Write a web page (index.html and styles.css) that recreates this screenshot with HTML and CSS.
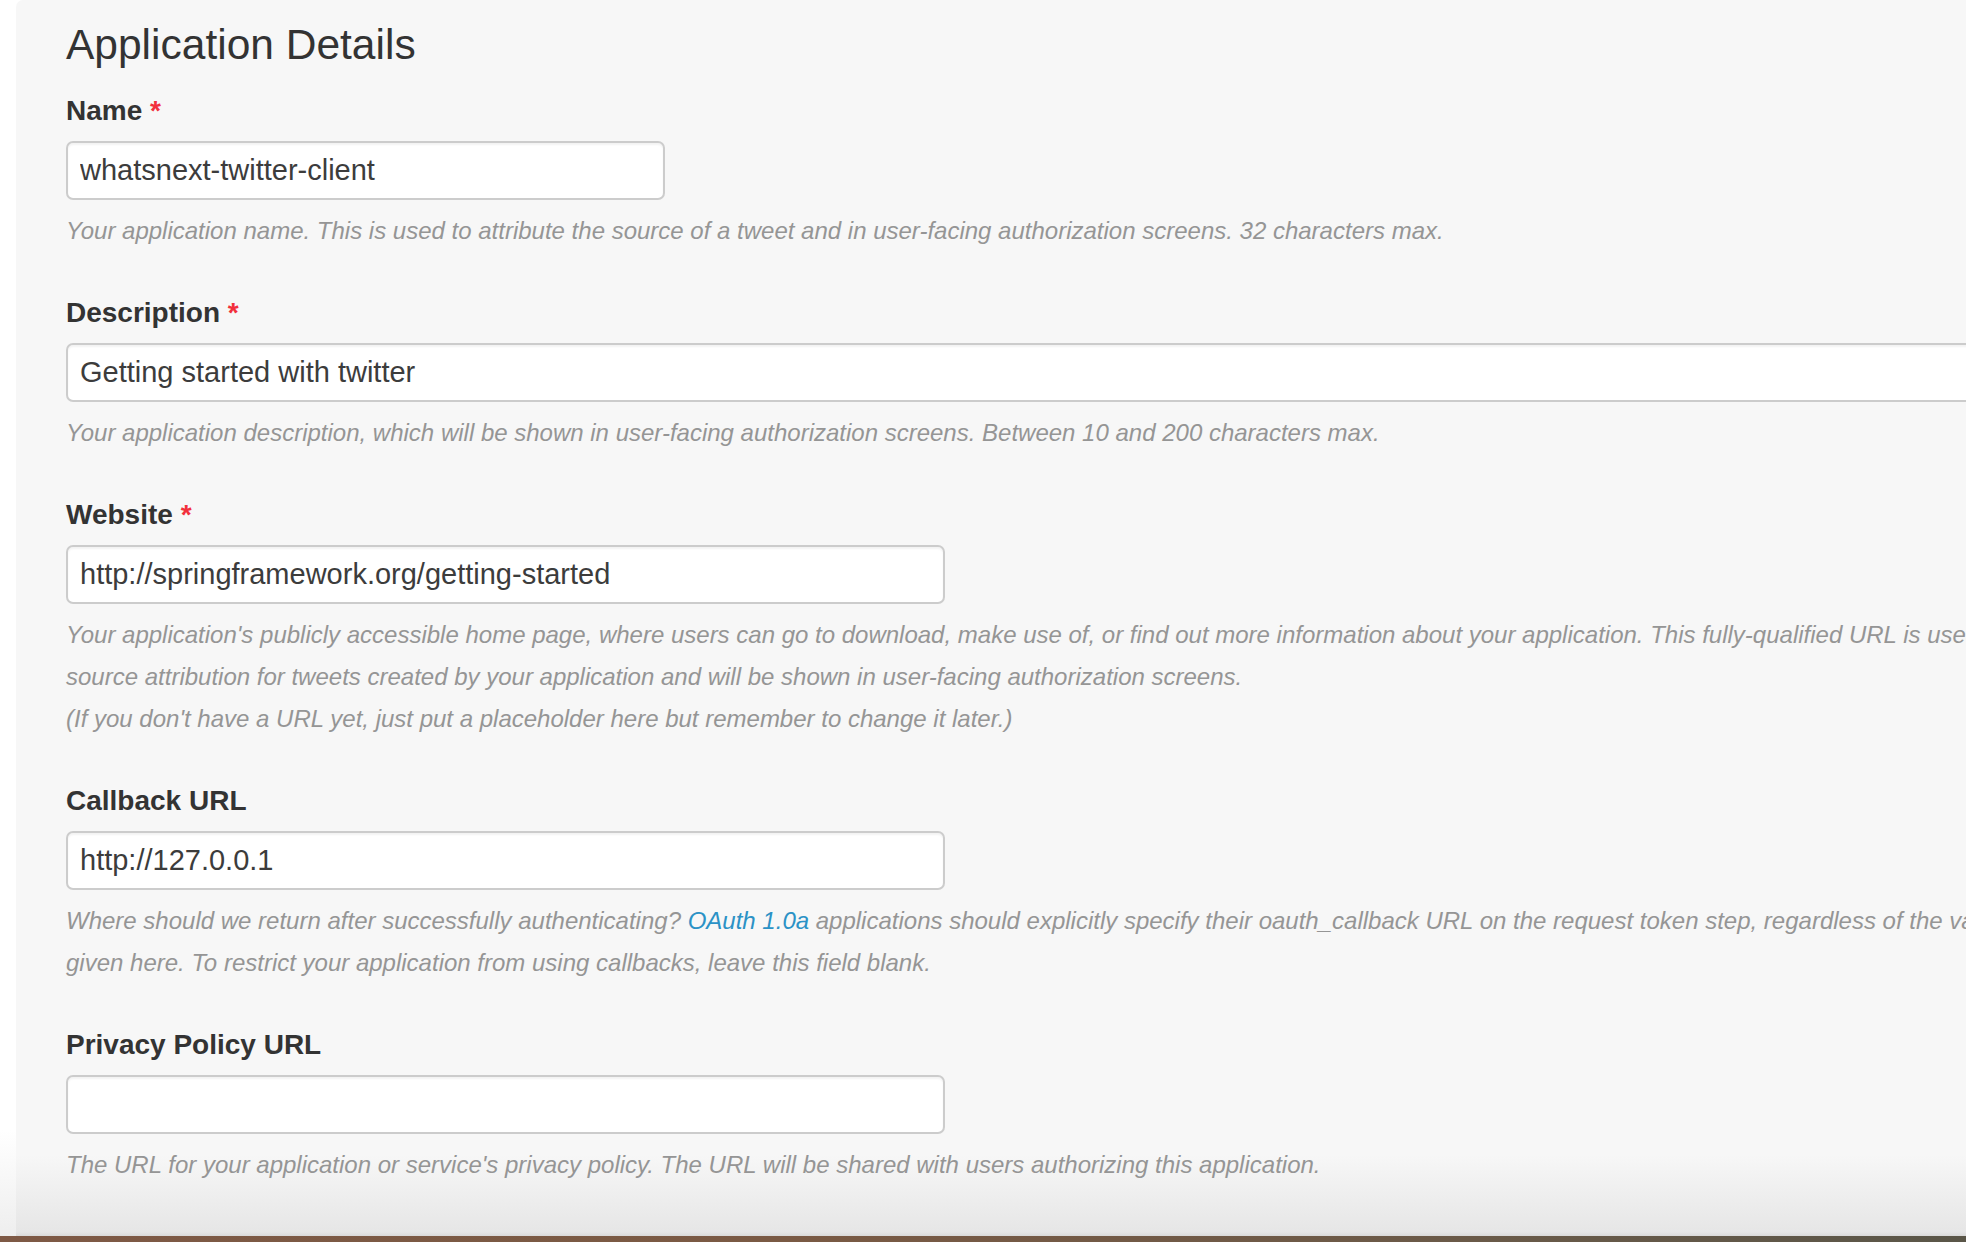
FILE: index.html
```html
<!DOCTYPE html>
<html lang="en">
<head>
<meta charset="utf-8">
<title>Application Details</title>
<link rel="stylesheet" href="styles.css">
</head>
<body>
<div class="screen">
  <div class="window">
    <div class="gutter"></div>
    <main class="panel">
      <form class="form">
        <h2 class="title">Application Details</h2>

        <div class="field">
          <label class="label" for="name">Name <span class="req">*</span></label>
          <input class="input input-sm" id="name" type="text" value="whatsnext-twitter-client">
          <p class="help">Your application name. This is used to attribute the source of a tweet and in user-facing authorization screens. 32 characters max.</p>
        </div>

        <div class="field">
          <label class="label" for="desc">Description <span class="req">*</span></label>
          <input class="input input-full" id="desc" type="text" value="Getting started with twitter">
          <p class="help">Your application description, which will be shown in user-facing authorization screens. Between 10 and 200 characters max.</p>
        </div>

        <div class="field">
          <label class="label" for="site">Website <span class="req">*</span></label>
          <input class="input input-md" id="site" type="text" value="http://springframework.org/getting-started">
          <p class="help">Your application's publicly accessible home page, where users can go to download, make use of, or find out more information about your application. This fully-qualified URL is used in the source attribution for tweets created by your application and will be shown in user-facing authorization screens.<br>(If you don't have a URL yet, just put a placeholder here but remember to change it later.)</p>
        </div>

        <div class="field">
          <label class="label" for="cb">Callback URL</label>
          <input class="input input-md" id="cb" type="text" value="http://127.0.0.1">
          <p class="help">Where should we return after successfully authenticating? <a class="link" href="#">OAuth 1.0a</a> applications should explicitly specify their oauth_callback URL on the request token step, regardless of the value given here. To restrict your application from using callbacks, leave this field blank.</p>
        </div>

        <div class="field">
          <label class="label" for="pp">Privacy Policy URL</label>
          <input class="input input-md" id="pp" type="text" value="">
          <p class="help">The URL for your application or service's privacy policy. The URL will be shared with users authorizing this application.</p>
        </div>

        <div class="field">
          <label class="label" for="tc">Terms and Conditions URL</label>
          <input class="input input-md" id="tc" type="text" value="">
        </div>
      </form>
    </main>
  </div>
  <div class="desktop"></div>
</div>
</body>
</html>
```

FILE: styles.css
```css
html, body {
  margin: 0;
  padding: 0;
  width: 1966px;
  height: 1242px;
  overflow: hidden;
  background: #ffffff;
  font-family: "Liberation Sans", Arial, Helvetica, sans-serif;
}

.screen {
  display: flex;
  flex-direction: column;
  height: 1242px;
}

.window {
  display: flex;
  height: 1236px;
  flex: none;
}

.gutter {
  width: 16px;
  flex: none;
  background: linear-gradient(to bottom, #ffffff 0, #ffffff 1130px, #eeeeee 1236px);
}

.panel {
  flex: 1;
  min-width: 0;
  overflow: hidden;
  border-top-left-radius: 7px;
  padding: 20px 0 0 50px;
  background: linear-gradient(to bottom, #f7f7f7 0, #f7f7f7 1155px, #e6e6e6 1232px, #dadada 1236px);
}

.form {
  width: 2000px;
  display: flex;
  flex-direction: column;
}

.title {
  margin: 0 0 24px;
  font-size: 42.5px;
  line-height: 50px;
  font-weight: normal;
  color: #333333;
}

.field {
  display: flex;
  flex-direction: column;
  align-items: flex-start;
  margin-bottom: 44px;
}

.label {
  font-size: 28px;
  line-height: 34px;
  font-weight: bold;
  color: #333333;
  margin-bottom: 13px;
}

.req {
  color: #f2303c;
}

.input {
  box-sizing: border-box;
  height: 59px;
  border: 2px solid #cccccc;
  border-radius: 7px;
  background: #ffffff;
  box-shadow: inset 0 2px 2px rgba(0, 0, 0, 0.05);
  padding: 0 12px;
  margin: 0;
  font-family: "Liberation Sans", Arial, Helvetica, sans-serif;
  font-size: 29px;
  color: #3c3c3c;
  outline: none;
}

.input-sm { width: 599px; }
.input-md { width: 879px; }
.input-full { width: 100%; }

.help {
  margin: 10px 0 0;
  font-size: 24px;
  line-height: 42px;
  font-style: italic;
  color: #959595;
}

.link {
  color: #2b92c6;
  text-decoration: none;
}

.desktop {
  height: 6px;
  flex: none;
  background: linear-gradient(to right, #7e5945 0, #7a5a44 40%, #6a5a48 75%, #5a5648 100%);
}
```
